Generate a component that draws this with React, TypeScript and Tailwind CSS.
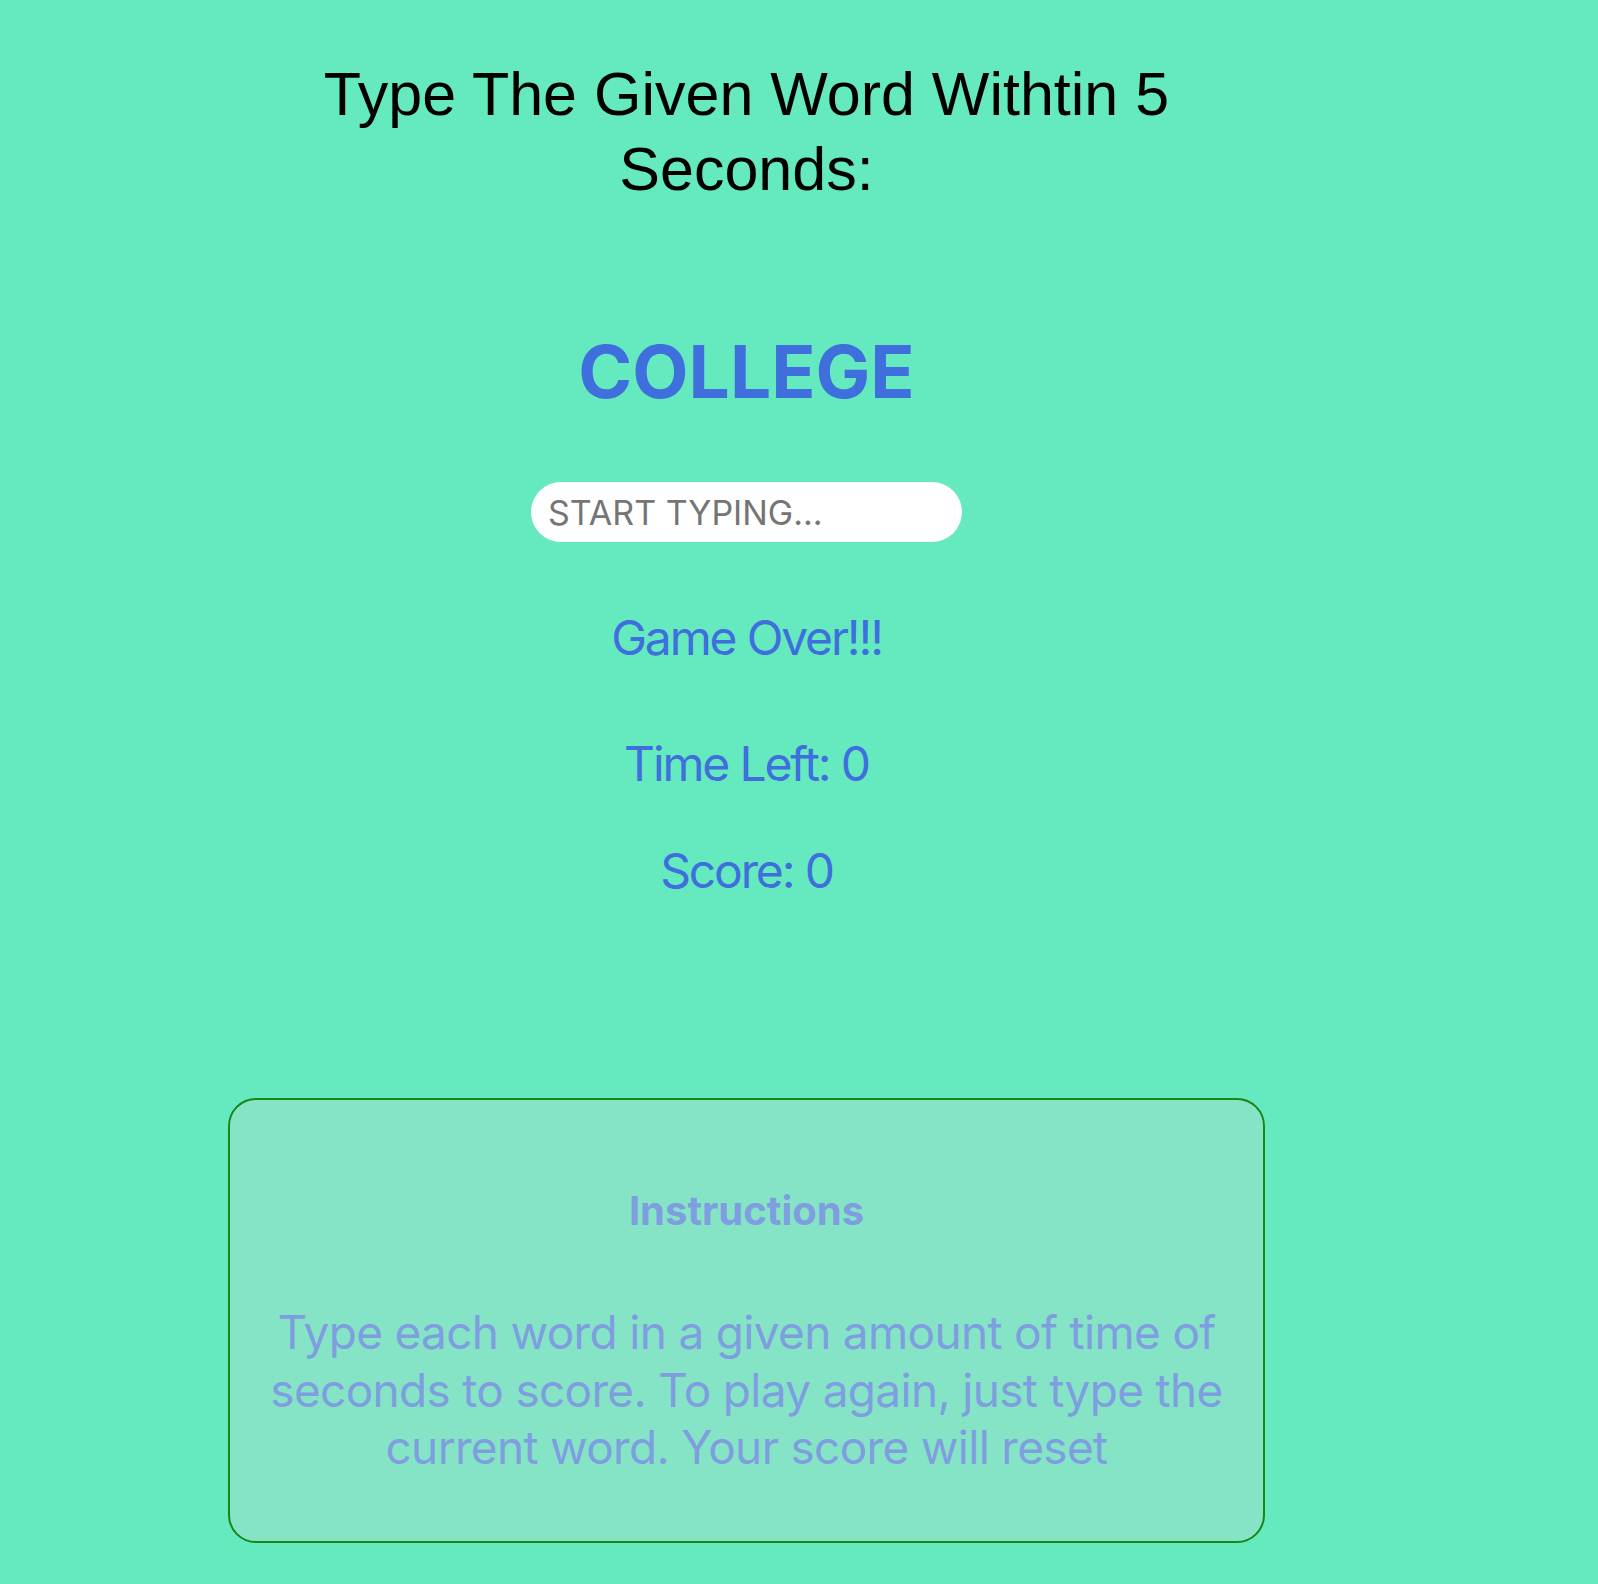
import React from 'react';

export default function App() {
  return (
    <div className="min-h-[1584px] w-full bg-[#65e9bf]">
      <div className="flex w-[1493px] flex-col items-center text-center">
        <h1 className="mt-[57px] w-[900px] font-['Liberation_Sans',Arial,sans-serif] text-[61px] font-normal leading-[75px] text-black">
          Type The Given Word Withtin 5 Seconds:
        </h1>

        <h2 className="mt-[128px] font-['Inter',sans-serif] text-[73px] font-bold leading-none text-[#3e6fdc]">
          COLLEGE
        </h2>

        <input
          autoFocus
          type="text"
          placeholder="START TYPING..."
          className="mt-[74px] h-[60px] w-[431px] rounded-full bg-white pl-[17px] font-['Inter',sans-serif] text-[34px] text-black caret-black outline-none placeholder:text-[#757575]"
        />

        <p className="mt-[72px] font-['Inter',sans-serif] text-[48px] leading-none tracking-[-0.045em] text-[#3e6fdc]">
          Game Over!!!
        </p>
        <p className="mt-[78px] font-['Inter',sans-serif] text-[48px] leading-none tracking-[-0.045em] text-[#3e6fdc]">
          Time Left: 0
        </p>
        <p className="mt-[59px] font-['Inter',sans-serif] text-[48px] leading-none tracking-[-0.045em] text-[#3e6fdc]">
          Score: 0
        </p>

        {/* Instructions */}
        <div className="mt-[203px] w-[1037px] rounded-[28px] border-2 border-[#178717] bg-[#86e4c6] px-[30px] pt-[91px] pb-[64px] font-['Inter',sans-serif] text-[#7e9ee0]">
          <h3 className="text-[40px] font-bold leading-none">Instructions</h3>
          <p className="mt-[73px] text-[46px] leading-[57.5px] tracking-[-0.015em]">
            Type each word in a given amount of time of seconds to score. To play again, just type the current word. Your score will reset
          </p>
        </div>
      </div>
    </div>
  );
}
